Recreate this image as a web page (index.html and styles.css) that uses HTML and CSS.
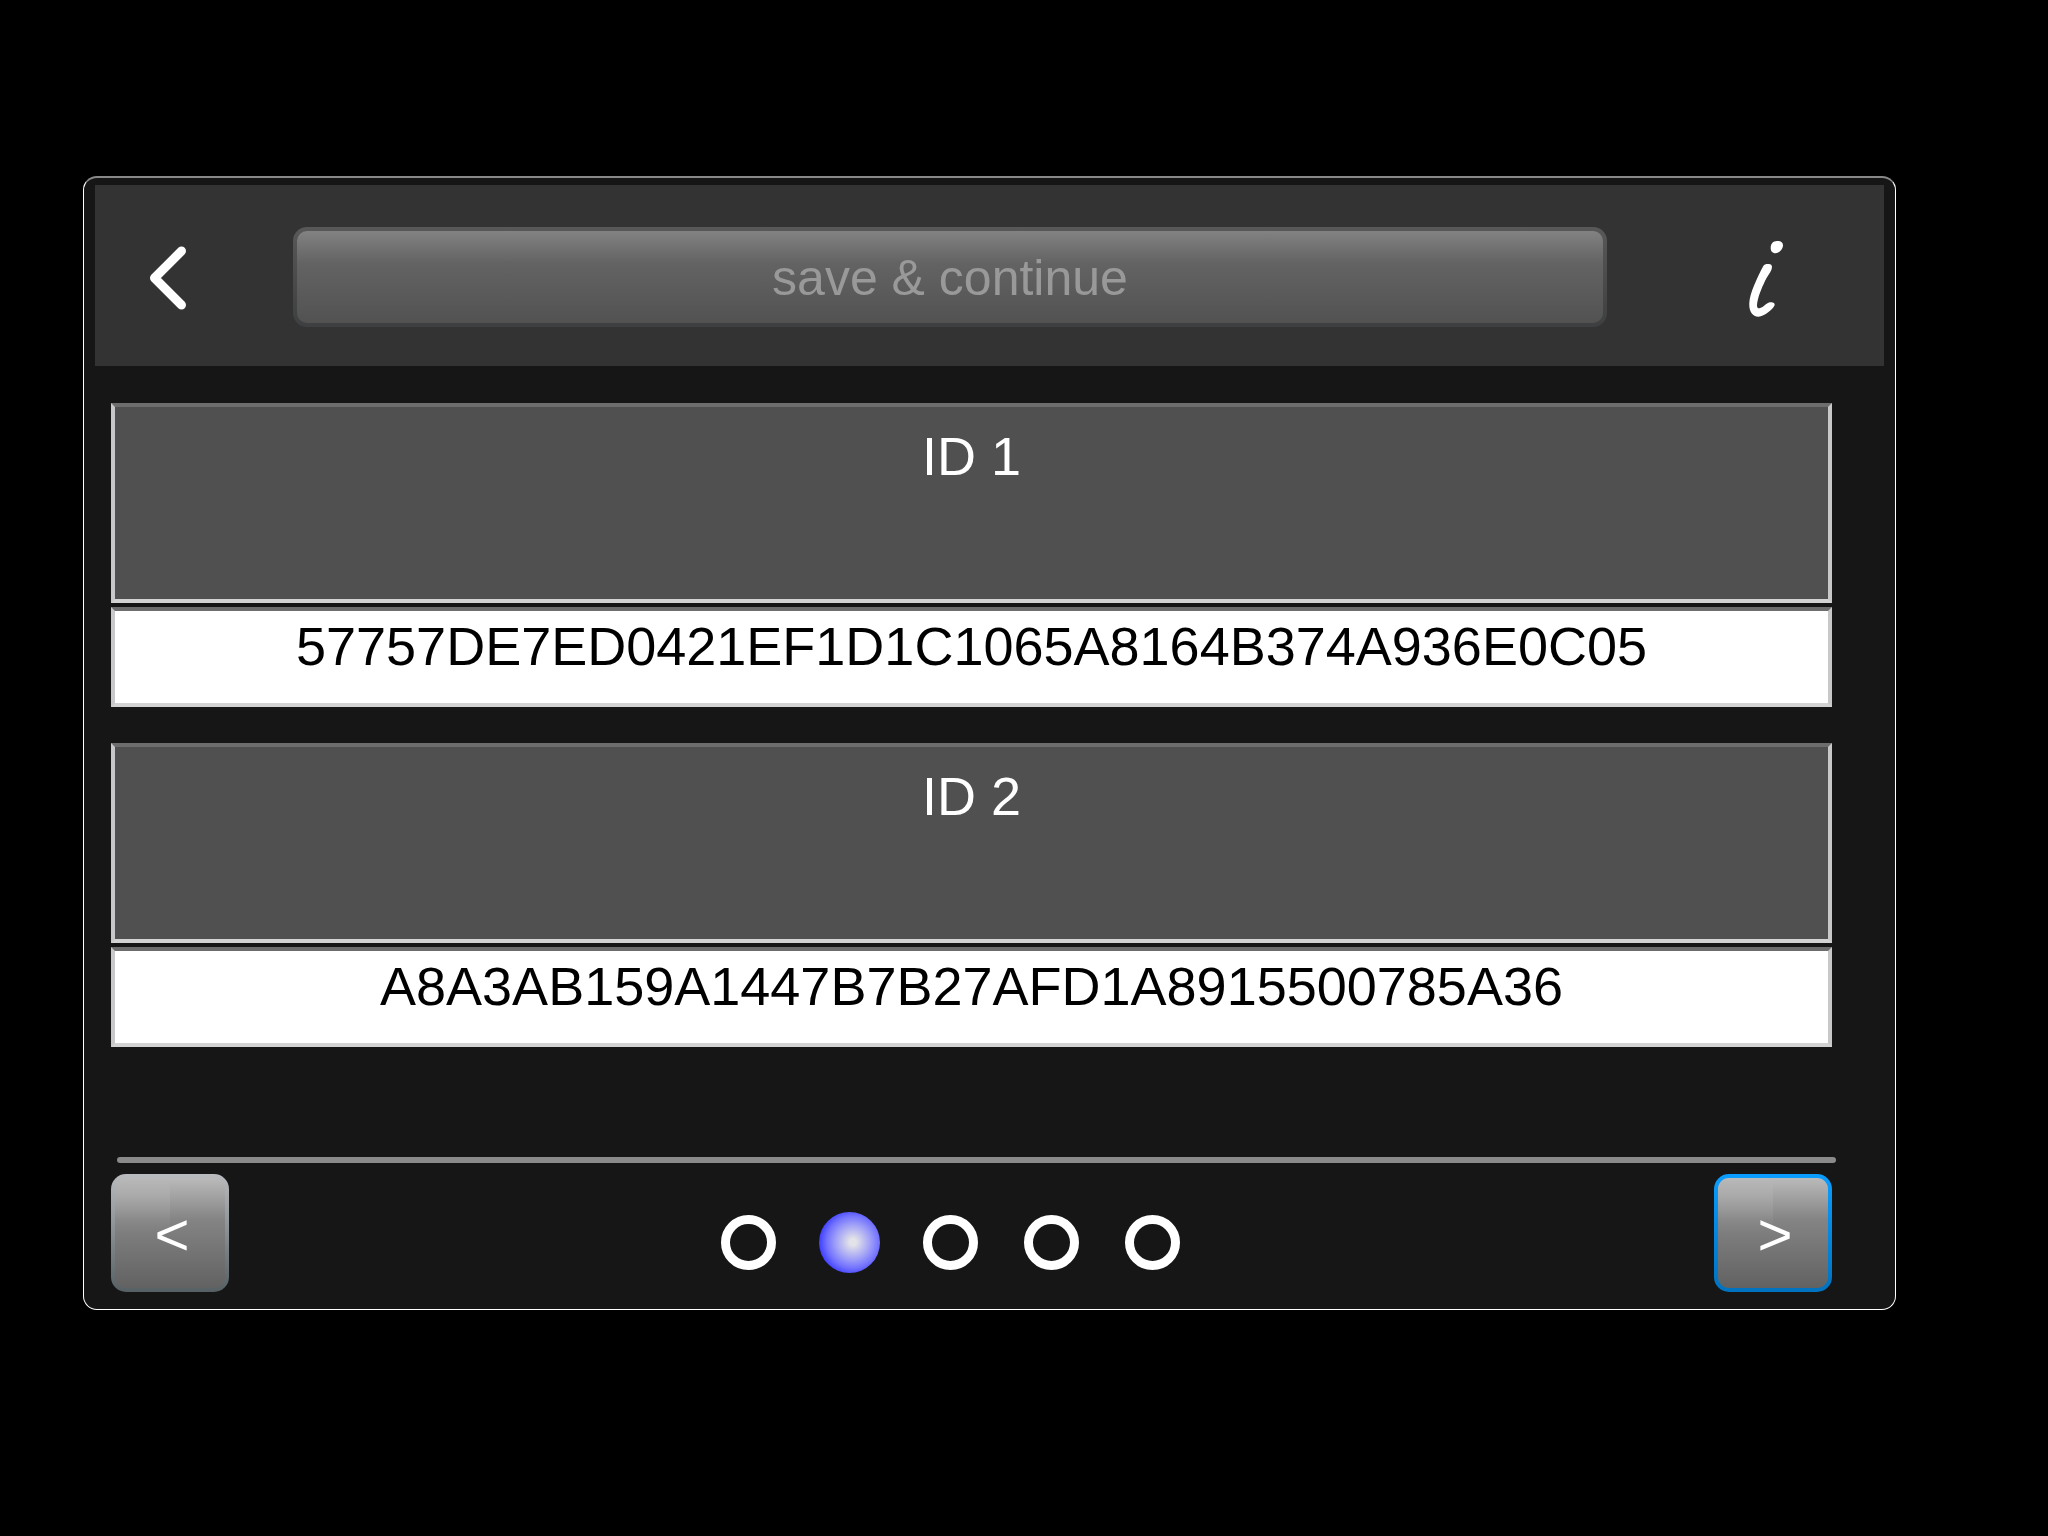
FILE: index.html
```html
<!DOCTYPE html>
<html lang="en">
<head>
<meta charset="utf-8">
<meta name="viewport" content="width=device-width, initial-scale=1">
<title>Save &amp; continue</title>
<link rel="stylesheet" href="styles.css">
</head>
<body>
<main class="panel">
  <header class="toolbar">
    <button class="icon-button back" type="button" aria-label="Back">
      <svg width="40" height="64" viewBox="0 0 40 64" fill="none" stroke="#fff" stroke-width="9" stroke-linecap="round" stroke-linejoin="round"><path d="M33.500 5 L6.500 32 L33.500 59"/></svg>
    </button>
    <button class="save" type="button" disabled>save &amp; continue</button>
    <button class="icon-button info" type="button" aria-label="Information">
      <svg width="42" height="82" viewBox="0 0 42 82" fill="#fff"><path d="M32 3C36 2.600 38.300 4.500 38 8C37.500 12 33.500 15.300 30.500 15.300C27 15.300 25.500 12.500 25.700 9.500C26 5.500 28 3.200 32 3Z"/><path d="M18.300 28C19.500 26 21.500 25.800 24 26C27 26.200 27.500 28.500 26.500 31.500C25.500 34.500 22 38.500 20 43C16.500 50.500 12.500 59.500 12 67C11.900 69.500 12.800 70.500 14.500 70.300C18 69.800 21 65.500 24 64.600C27 63.700 30.500 65 29.500 67.500C28 71 19.500 78.500 13.500 78.700C7.500 78.700 3.800 73.500 4.300 65C4.800 55 12.500 39 18.300 28Z"/></svg>
    </button>
  </header>
  <form class="content">
    <div class="field">
      <label class="field-label" for="id1">ID 1</label>
      <input class="field-value" id="id1" type="text" readonly value="57757DE7ED0421EF1D1C1065A8164B374A936E0C05">
    </div>
    <div class="field">
      <label class="field-label" for="id2">ID 2</label>
      <input class="field-value" id="id2" type="text" readonly value="A8A3AB159A1447B7B27AFD1A8915500785A36">
    </div>
    <hr class="divider">
    <nav class="pager">
      <button class="step prev" type="button" aria-label="Previous page">&lt;</button>
      <div class="dots">
        <input class="dot" type="radio" name="page" aria-label="Page 1">
        <input class="dot" type="radio" name="page" aria-label="Page 2" checked>
        <input class="dot" type="radio" name="page" aria-label="Page 3">
        <input class="dot" type="radio" name="page" aria-label="Page 4">
        <input class="dot" type="radio" name="page" aria-label="Page 5">
      </div>
      <button class="step next" type="button" aria-label="Next page">&gt;</button>
    </nav>
  </form>
</main>
</body>
</html>
```
FILE: styles.css
```css
* {
  box-sizing: border-box;
}

body {
  margin: 0;
  padding: 176px 152px 100px 83px;
  background: #000;
  color: #fff;
  font-family: "Liberation Sans", Arial, Helvetica, sans-serif;
  font-size: 54px;
  line-height: 62px;
}

button,
input {
  margin: 0;
  font: inherit;
}

.panel {
  padding: 7px 11px 17px;
  border: 1px solid #fff;
  border-top: 2px solid #888;
  border-radius: 14px;
  background: #161616;
}

.toolbar {
  display: grid;
  grid-template-columns: 198px 1fr 277px;
  align-items: center;
  padding: 42px 0 39px;
  background: #333;
}

.icon-button {
  display: flex;
  align-items: center;
  justify-content: center;
  height: 100px;
  padding: 0;
  border: 0;
  background: none;
}

.back {
  padding: 2px 52px 0 0;
}

.info {
  padding: 4px 0 0 40px;
}

.save {
  height: 100px;
  padding: 2px 0 0;
  border: 4px solid transparent;
  border-radius: 14px;
  background:
    linear-gradient(#828282, #636363 35%, #525252) padding-box,
    linear-gradient(#585858, #3e3f40) border-box;
  color: #999;
  font-size: 50px;
}

.content {
  padding: 37px 52px 0 16px;
}

.field {
  display: flex;
  flex-direction: column;
  gap: 4px;
  margin-bottom: 36px;
}

.field-label,
.field-value {
  width: 100%;
  border: 4px solid;
  border-color: #6d6d6e #c8c8ca #d3d3d3;
  border-radius: 0;
  text-align: center;
}

.field-label {
  padding: 18px 0 112px;
  background: #505050;
}

.field-value {
  height: 100px;
  padding: 4px 0 26px;
  background: #fff;
  color: #000;
  outline: 0;
}

.divider {
  height: 6px;
  margin: 110px -4px 11px 6px;
  border: 0;
  border-radius: 3px;
  background: #8a8a8a;
}

.pager {
  display: flex;
}

.step {
  width: 118px;
  height: 118px;
  padding: 4px 0 0 4px;
  border: 4px solid transparent;
  border-radius: 15px;
  color: #fff;
  font-size: 60px;
}

.prev {
  background:
    linear-gradient(#bababa00, #bababa50 24%, #bababa00) left top / 50% 50% no-repeat padding-box,
    linear-gradient(#bababa, #848484 38%, #626262) padding-box,
    linear-gradient(#b9bbbe, #566064) border-box;
}

.next {
  background:
    linear-gradient(#bababa00, #bababa50 24%, #bababa00) left top / 50% 50% no-repeat padding-box,
    linear-gradient(#bababa, #848484 38%, #626262) padding-box,
    linear-gradient(#0a9dff, #0072bf) border-box;
}

.dots {
  display: flex;
  flex: 1;
  align-items: center;
  justify-content: center;
  gap: 46px;
  padding: 18px 42px 0 0;
}

.dot {
  width: 55px;
  height: 55px;
  border: 9px solid #fff;
  border-radius: 50%;
  appearance: none;
}

.dot:checked {
  width: 61px;
  height: 61px;
  margin: 0 -3px;
  border: 0;
  background: radial-gradient(circle 35px at 34px 30px, #e2e2e8 10%, #9f9ff8 50%, #7272ff 75%, #3838ff);
}
```
